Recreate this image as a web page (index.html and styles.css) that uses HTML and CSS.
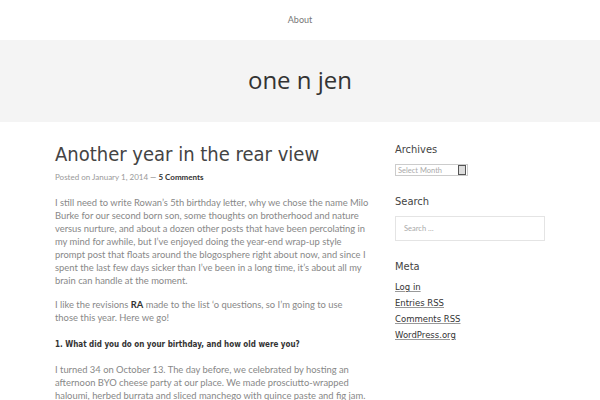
FILE: index.html
```html
<!DOCTYPE html>
<html lang="en">
<head>
<meta charset="utf-8">
<title>one n jen</title>
<link rel="stylesheet" href="styles.css">
</head>
<body>
<nav class="top-nav"><a href="#">About</a></nav>
<header class="site-header"><h1 class="site-title">one n jen</h1></header>
<div class="wrap">
  <main class="content">
    <h2 class="entry-title">Another year in the rear view</h2>
    <div class="entry-meta">Posted on January 1, 2014 <span class="dash">—</span> <a href="#">5 Comments</a></div>
    <div class="entry-body">
      <p>I still need to write Rowan’s 5th birthday letter, why we chose the name Milo<br>Burke for our second born son, some thoughts on brotherhood and nature<br>versus nurture, and about a dozen other posts that have been percolating in<br>my mind for awhile, but I’ve enjoyed doing the year-end wrap-up style<br>prompt post that floats around the blogosphere right about now, and since I<br>spent the last few days sicker than I’ve been in a long time, it’s about all my<br>brain can handle at the moment.</p>
      <p>I like the revisions <a href="#">RA</a> made to the list ‘o questions, so I’m going to use<br>those this year. Here we go!</p>
      <p class="q">1. What did you do on your birthday, and how old were you?</p>
      <p>I turned 34 on October 13. The day before, we celebrated by hosting an<br>afternoon BYO cheese party at our place. We made prosciutto-wrapped<br>haloumi, herbed burrata and sliced manchego with quince paste and fig jam.</p>
    </div>
  </main>
  <aside class="sidebar">
    <section class="widget">
      <h3 class="widget-title">Archives</h3>
      <div class="select"><span class="select-label">Select Month</span><span class="select-btn"></span></div>
    </section>
    <section class="widget">
      <h3 class="widget-title">Search</h3>
      <div class="search-box">Search …</div>
    </section>
    <section class="widget">
      <h3 class="widget-title meta-title">Meta</h3>
      <ul class="meta-list">
        <li><a href="#">Log in</a></li>
        <li><a href="#">Entries RSS</a></li>
        <li><a href="#">Comments RSS</a></li>
        <li><a href="#">WordPress.org</a></li>
      </ul>
    </section>
  </aside>
</div>
</body>
</html>
```
FILE: styles.css
```css
html, body { margin: 0; padding: 0; background: #fff; }
body { font-family: Lato, "Open Sans", sans-serif; color: #777; }
a { color: inherit; text-decoration: none; }

.top-nav { height: 40px; display: flex; align-items: center; justify-content: center; font-size: 9px; color: #777; padding-bottom: 1px; box-sizing: border-box; }

.site-header { height: 82px; background: #f4f4f4; display: flex; align-items: center; justify-content: center; padding-bottom: 3px; box-sizing: border-box; }
.site-title { margin: 0; font-family: "Open Sans", sans-serif; font-weight: 400; font-size: 24px; color: #333; }

.wrap { width: 490px; margin: 0 auto; display: flex; gap: 40px; padding-top: 20px; }
.content { width: 300px; flex: none; }
.sidebar { width: 150px; flex: none; padding-top: 1px; }

.entry-title, .widget-title, .entry-body .q { font-family: "DejaVu Sans Condensed", "DejaVu Sans", sans-serif; font-stretch: condensed; }

.entry-title { margin: 0; font-weight: 400; font-size: 20px; line-height: 24px; color: #444; }
.entry-meta { margin-top: 5px; font-size: 8px; line-height: 12px; color: #999; }
.entry-meta a { color: #333; font-weight: 700; }
.entry-meta .dash { color: #777; }

.entry-body { margin-top: 13px; font-size: 9.4px; line-height: 13px; color: #888; white-space: nowrap; }
.entry-body p { margin: 0 0 11px; }
.entry-body a { color: #333; font-weight: 700; }
.entry-body .q { font-weight: 700; color: #333; font-size: 8px; margin-top: 14px; margin-bottom: 12px; }

.widget { margin-bottom: 19px; }
.widget-title { margin: 0 0 8px; font-weight: 400; font-size: 11px; color: #444; }
.meta-title { margin-bottom: 6px; }
.select { width: 69px; height: 10px; border: 1px solid #ccc; display: flex; align-items: center; justify-content: space-between; font-size: 7.5px; color: #aaa; padding-left: 2px; }
.select-btn { width: 6px; height: 8px; background: #ddd; border: 1px solid #555; margin-right: 1px; }
.search-box { height: 25px; border: 1px solid #e4e4e4; box-sizing: border-box; display: flex; align-items: center; padding-left: 8px; font-size: 7.5px; color: #aaa; }
.meta-list { list-style: none; margin: 0; padding: 0; font-family: "DejaVu Sans", sans-serif; font-size: 8.5px; }
.meta-list li { line-height: 16px; }
.meta-list a { color: #333; text-decoration: underline; text-decoration-color: #999; }
```
